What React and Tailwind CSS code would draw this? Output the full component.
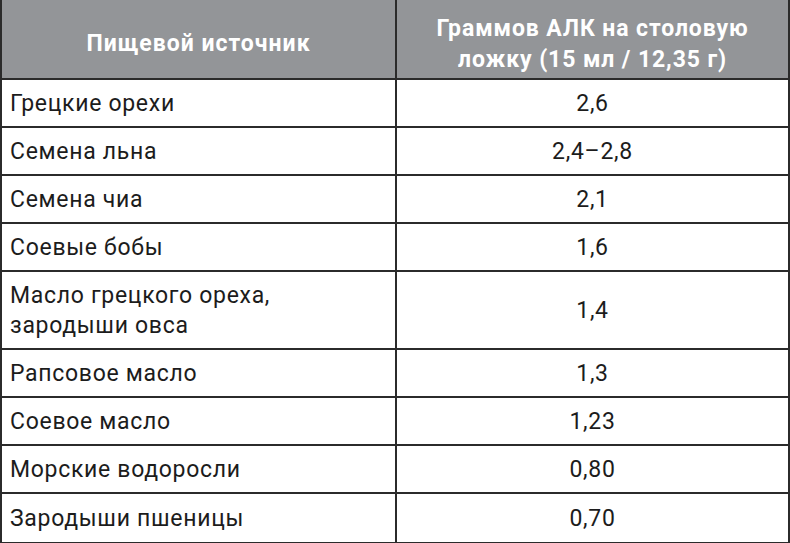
import React from 'react';

const rows = [
  { name: 'Грецкие орехи', value: '2,6' },
  { name: 'Семена льна', value: '2,4–2,8' },
  { name: 'Семена чиа', value: '2,1' },
  { name: 'Соевые бобы', value: '1,6' },
  { name: ['Масло грецкого ореха,', 'зародыши овса'], value: '1,4', tall: true },
  { name: 'Рапсовое масло', value: '1,3' },
  { name: 'Соевое масло', value: '1,23' },
  { name: 'Морские водоросли', value: '0,80' },
  { name: 'Зародыши пшеницы', value: '0,70' },
];

export default function App() {
  return (
    <div
      className="w-[790px] h-[543px] bg-white text-[#1c1c1c]"
      style={{ fontFamily: 'Roboto, "Noto Sans", sans-serif' }}
    >
      <div className="grid grid-cols-[395px_1fr] border-l-2 border-r-2 border-b-2 border-[#2b2b2b]">
        {/* header */}
        <div className="h-[80px] pt-[10px] bg-[#939598] border-r-2 border-b-2 border-[#2b2b2b] flex items-center justify-center">
          <span className="text-white font-bold text-[23px] tracking-[1px]">Пищевой источник</span>
        </div>
        <div className="h-[80px] pt-[10px] bg-[#939598] border-b-2 border-[#2b2b2b] flex items-center justify-center">
          <span className="text-white font-bold text-[23px] leading-[31px] tracking-[0.9px] text-center">
            Граммов АЛК на столовую
            <br />
            ложку (15 мл / 12,35 г)
          </span>
        </div>

        {rows.map((r, i) => (
          <React.Fragment key={i}>
            <div
              className={`${r.tall ? 'h-[78px]' : 'h-[48px]'} pt-[2px] border-r-2 ${i === rows.length - 1 ? '' : 'border-b-2'} border-[#2b2b2b] flex items-center pl-[8px]`}
            >
              <span className="text-[23px] leading-[30px] tracking-[0.7px]">
                {Array.isArray(r.name) ? (
                  <>
                    {r.name[0]}
                    <br />
                    {r.name[1]}
                  </>
                ) : (
                  r.name
                )}
              </span>
            </div>
            <div
              className={`${r.tall ? 'h-[78px]' : 'h-[48px]'} pt-[2px] ${i === rows.length - 1 ? '' : 'border-b-2'} border-[#2b2b2b] flex items-center justify-center`}
            >
              <span className="text-[23px] tracking-[0.7px]">{r.value}</span>
            </div>
          </React.Fragment>
        ))}
      </div>
    </div>
  );
}
